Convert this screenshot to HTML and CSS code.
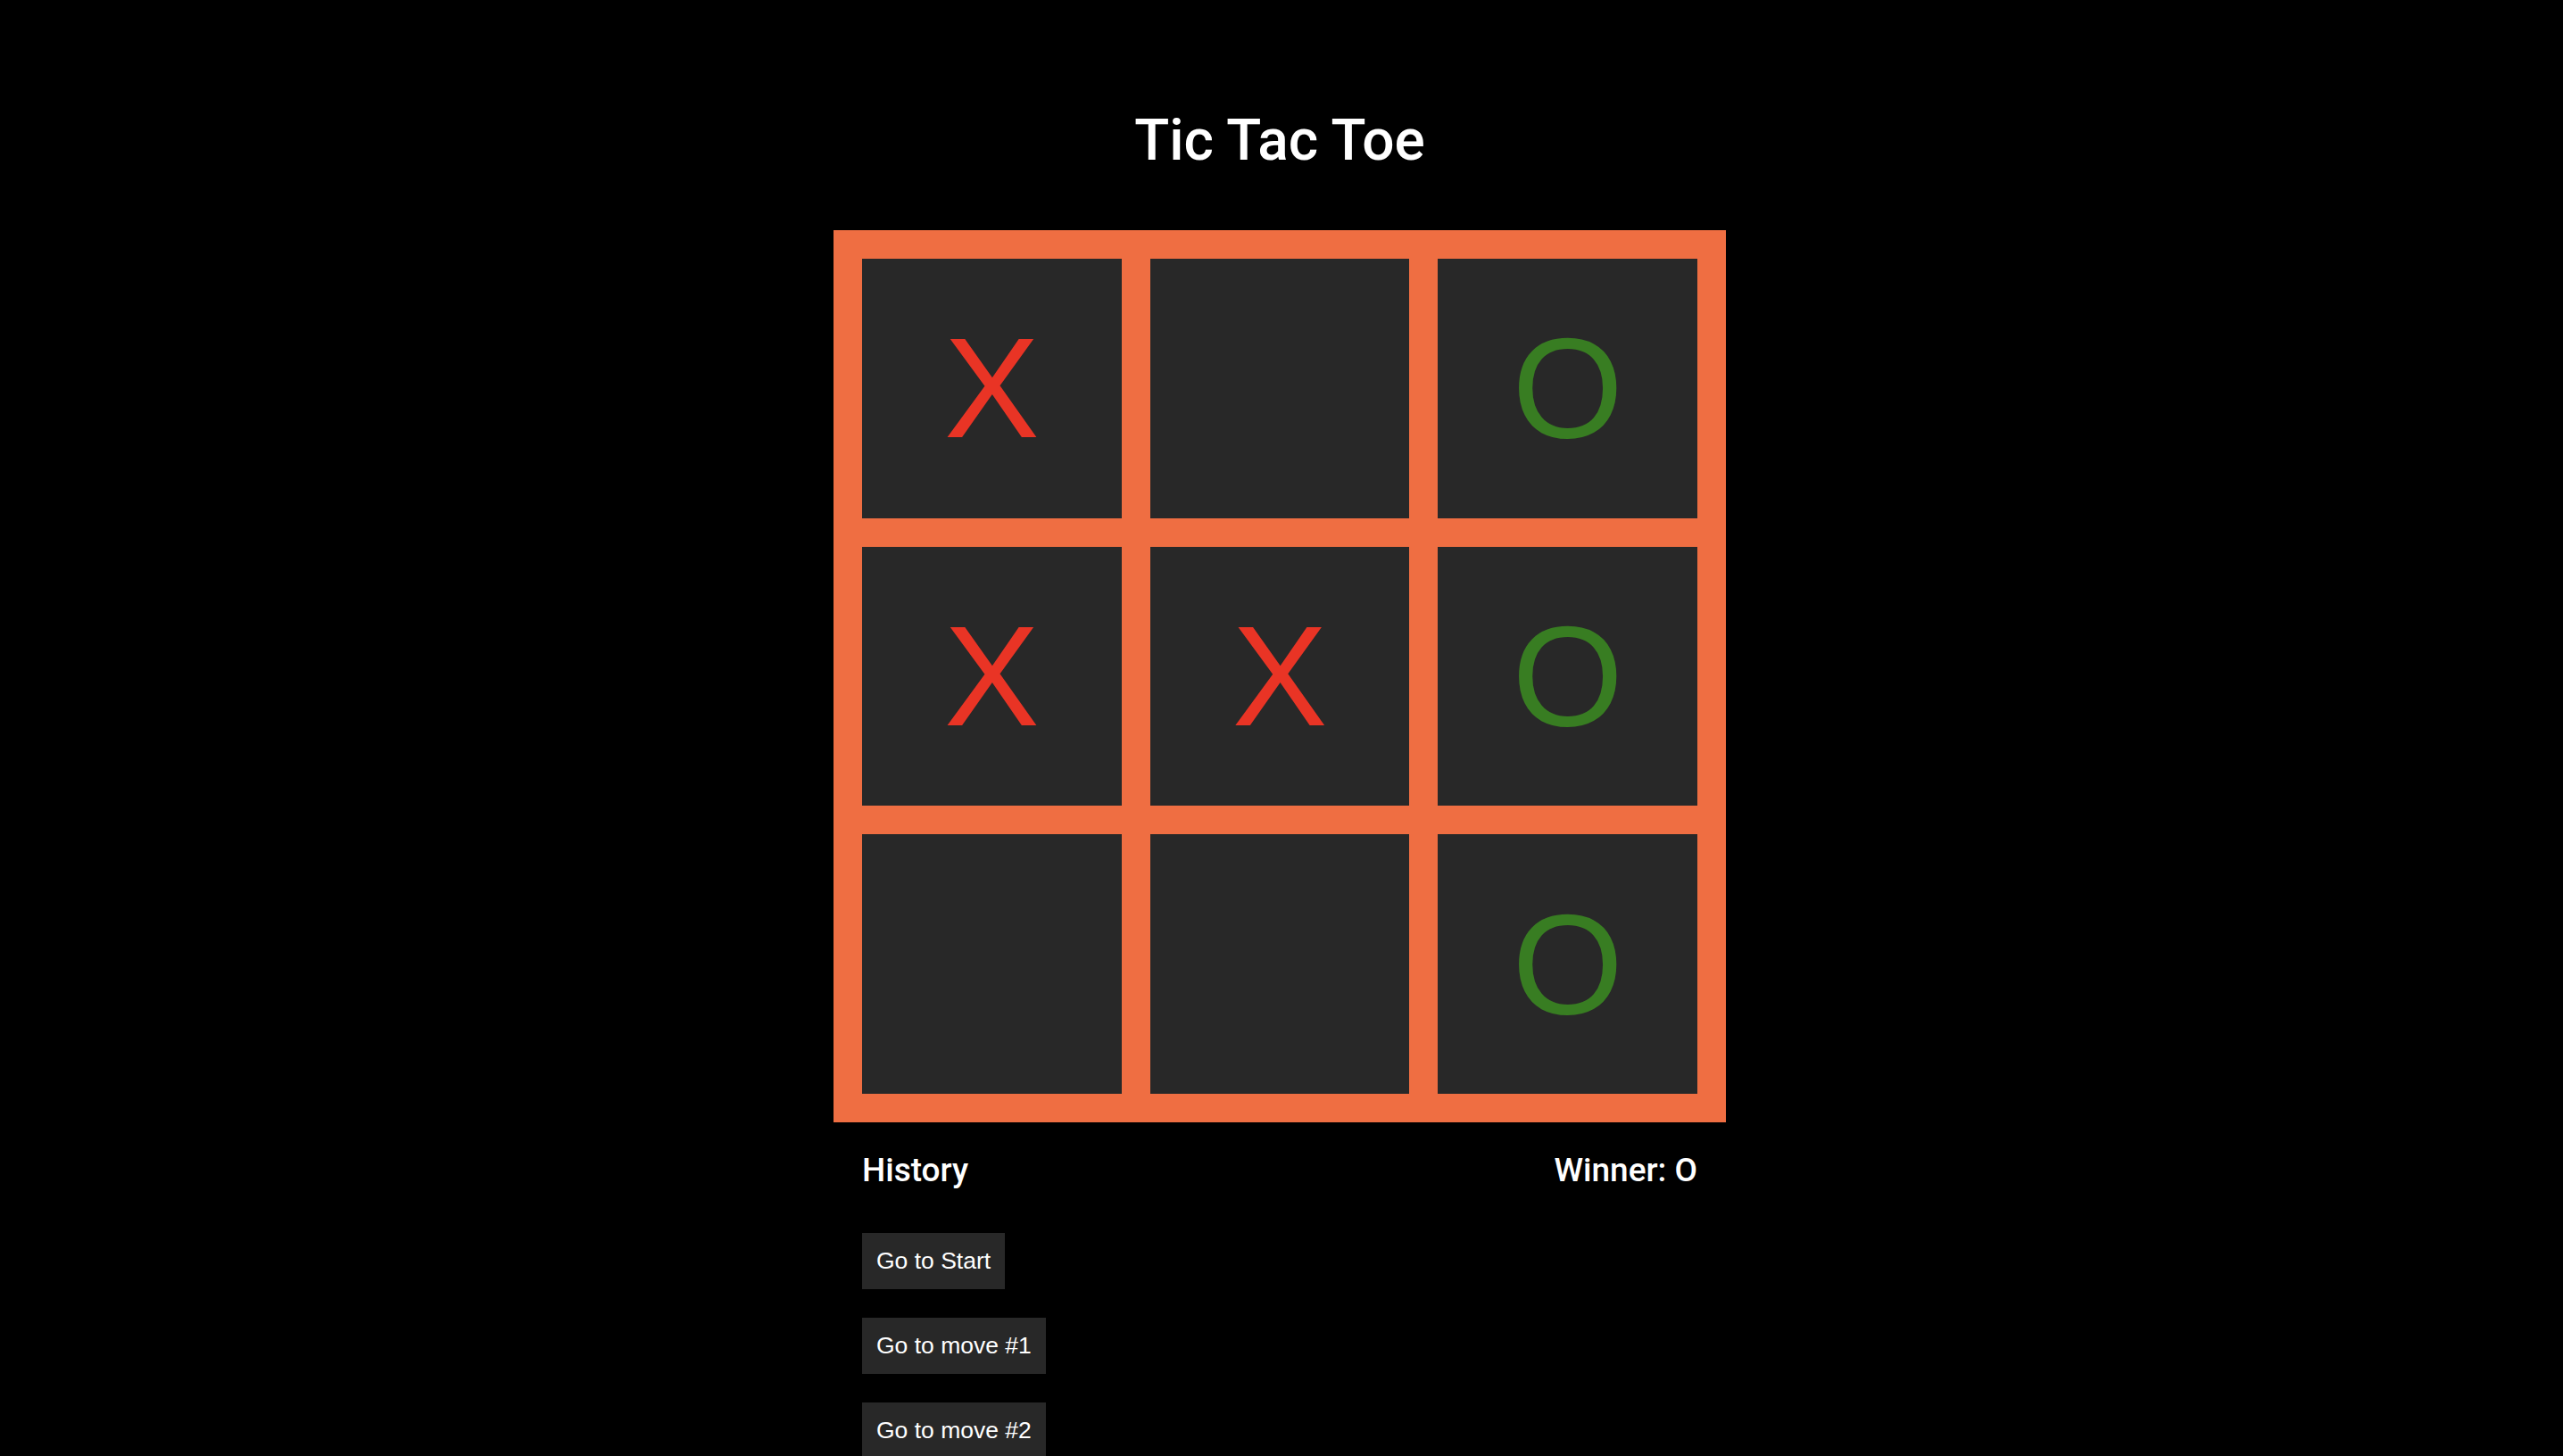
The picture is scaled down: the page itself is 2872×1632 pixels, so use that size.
FILE: index.html
```html
<!DOCTYPE html>
<html lang="en">
<head>
<meta charset="utf-8">
<title>Tic Tac Toe</title>
<link rel="stylesheet" href="styles.css">
</head>
<body>
<main class="app">
  <h1 class="title">Tic Tac Toe</h1>
  <div class="board">
    <div class="cell x">X</div>
    <div class="cell"></div>
    <div class="cell o">O</div>
    <div class="cell x">X</div>
    <div class="cell x">X</div>
    <div class="cell o">O</div>
    <div class="cell"></div>
    <div class="cell"></div>
    <div class="cell o">O</div>
  </div>
  <div class="info">
    <div class="info-head">
      <h2 class="label">History</h2>
      <h2 class="label">Winner: O</h2>
    </div>
    <div class="history">
      <button class="move">Go to Start</button>
      <button class="move">Go to move #1</button>
      <button class="move">Go to move #2</button>
    </div>
  </div>
</main>
</body>
</html>
```

FILE: styles.css
```css
html, body {
  margin: 0;
  padding: 0;
  background: #000;
  color: #fff;
}
body {
  font-family: Roboto, "Liberation Sans", sans-serif;
}
.app {
  display: flex;
  flex-direction: column;
  align-items: center;
  padding-right: 4px;
}
.title {
  font-family: Roboto, sans-serif;
  font-weight: 500;
  font-size: 64px;
  line-height: normal;
  margin: 120px 0 63px;
}
.board {
  box-sizing: border-box;
  width: 1000px;
  height: 1000px;
  padding: 32px;
  background: #ef6e42;
  display: grid;
  grid-template-columns: repeat(3, 1fr);
  grid-template-rows: repeat(3, 1fr);
  gap: 32px;
}
.cell {
  background: #282828;
  display: flex;
  align-items: center;
  justify-content: center;
  font-family: "Liberation Sans", Arial, sans-serif;
  font-size: 160px;
  line-height: normal;
}
.x { color: #e93425; }
.o { color: #387d22; }
.info {
  box-sizing: border-box;
  width: 1000px;
  padding: 0 32px;
}
.info-head {
  display: flex;
  justify-content: space-between;
  margin-top: 32px;
}
.label {
  margin: 0;
  font-family: Roboto, sans-serif;
  font-weight: 500;
  font-size: 37px;
  line-height: normal;
}
.history {
  display: flex;
  flex-direction: column;
  align-items: flex-start;
  gap: 32px;
  margin-top: 49px;
}
.move {
  font-family: "Liberation Sans", Arial, sans-serif;
  font-size: 26.5px;
  line-height: normal;
  padding: 16px;
  border: 0;
  background: #282828;
  color: #fff;
}
```
